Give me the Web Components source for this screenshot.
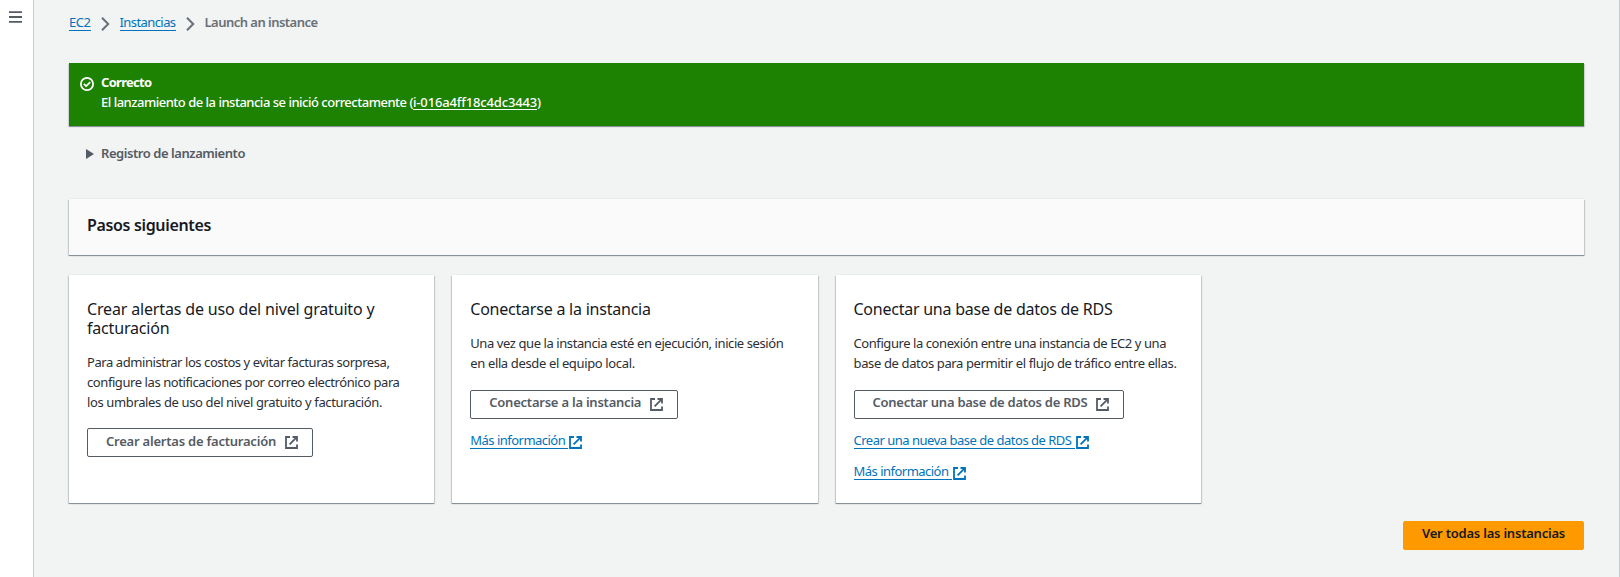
<!DOCTYPE html>
<html lang="es">
<head>
<meta charset="utf-8">
<title>Launch an instance | EC2</title>
<style>
html, body { margin: 0; height: 100%; }
body { font: 13px/20px "Noto Sans", "Open Sans", sans-serif; color: #16191f; background: #f2f3f3; overflow: hidden; }
</style>
</head>
<body>
<launch-page></launch-page>
<script>
const define = (name, html, setup) => customElements.define(name, class extends HTMLElement {
  connectedCallback() {
    if (this.shadowRoot) return;
    this.attachShadow({ mode: 'open' }).innerHTML = html;
    if (setup) setup(this, this.shadowRoot);
  }
});

// A line of text whose tracking is adjusted so that it spans `w` pixels.
define('fit-text', `<style>
  :host { display: inline-block; white-space: pre; }
  </style><slot></slot>`, host => {
  const w = parseFloat(host.getAttribute('w'));
  const n = host.textContent.length;
  const natural = host.getBoundingClientRect().width;
  host.style.letterSpacing = ((w - natural) / n).toFixed(3) + 'px';
});

define('icon-external', `<style>
  :host { display: block; width: 13px; height: 13px; } svg { display: block; }
  </style><svg width="13" height="13" viewBox="0 0 13 13" fill="none" stroke="currentColor" stroke-width="1.8">
  <path d="M5 1H1V12H12V8.5"/><path d="M7.5 1H12V5.5M11.8 1.2L4.6 8.4"/></svg>`);

define('icon-menu', `<style>
  :host { display: block; color: #545b64; } svg { display: block; }
  </style><svg width="13" height="12" viewBox="0 0 13 12" fill="currentColor">
  <path d="M0 .2h13v1.8H0zM0 5.1h13v1.8H0zM0 10h13v1.8H0z"/></svg>`);

define('icon-chevron', `<style>
  :host { display: block; color: #687078; } svg { display: block; }
  </style><svg width="9" height="14" viewBox="0 0 9 14" fill="none" stroke="currentColor" stroke-width="2">
  <path d="M1 .8L7.2 7L1 13.2"/></svg>`);

define('icon-success', `<style>
  :host { display: block; color: #fff; } svg { display: block; }
  </style><svg width="14" height="14" viewBox="0 0 14 14" fill="none" stroke="currentColor" stroke-width="1.8">
  <circle cx="7" cy="7" r="6.1"/><path d="M3.8 6.8L6.2 9.1L10.2 5.1"/></svg>`);

define('side-rail', `<style>
  :host { display: block; box-sizing: border-box; width: 34px; background: #fff; border-right: 1px solid #c9cccc; padding: 11px 0 0 9px; }
  </style><icon-menu></icon-menu>`);

define('crumb-trail', `<style>
  :host { display: flex; height: 20px; line-height: 20px; }
  a { color: #0073bb; border-bottom: 1px solid #0073bb; height: 18px; }
  icon-chevron { margin: 5px 10px 0 10px; }
  b { font-weight: 600; color: #687078; }
  </style>
  <a><fit-text w="21.5">EC2</fit-text></a><icon-chevron></icon-chevron>
  <a><fit-text w="56">Instancias</fit-text></a><icon-chevron></icon-chevron>
  <b><fit-text w="113">Launch an instance</fit-text></b>`);

define('flash-bar', `<style>
  :host { display: flex; box-sizing: border-box; height: 63px; padding: 9px 11px; background: #1d8102; color: #fff;
    box-shadow: 0 1px 0 0 #879196, 1px 1px 1px 0 rgba(0,28,36,.15), -1px 1px 1px 0 rgba(0,28,36,.15); }
  icon-success { margin: 5px 7px 0 0; }
  b { display: block; font-weight: 700; } p { margin: 0; font-weight: 500; display: flex; }
  a { height: 17px; border-bottom: 1px solid #fff; }
  </style>
  <icon-success></icon-success>
  <div><b><fit-text w="50.5">Correcto</fit-text></b>
  <p><fit-text w="312">El lanzamiento de la instancia se inició correctamente (</fit-text><a><fit-text w="124">i-016a4ff18c4dc3443</fit-text></a>)</p></div>`);

define('expand-row', `<style>
  :host { display: flex; align-items: center; height: 20px; color: #545b64; font-weight: 600; padding-left: 17px; }
  i { width: 0; height: 0; border: solid transparent; border-width: 5px 0 5px 8px; border-left-color: #545b64; margin: 2px 7px 0 0; }
  </style><i></i><slot></slot>`);

define('panel-header', `<style>
  :host { display: block; box-sizing: border-box; height: 56px; padding: 16px 18px; background: #fafafa;
    font-size: 16px; line-height: 20px; font-weight: 600;
    box-shadow: 0 1px 0 0 #879196, 1px 1px 1px 0 #c6caca, -1px 1px 1px 0 #c6caca, 0 -1px 0 0 #eaeded; }
  </style><slot></slot>`);

define('step-card', `<style>
  :host { display: flex; flex-direction: column; align-items: flex-start; box-sizing: border-box; height: 228px; padding: 25px 18px 0; background: #fff;
    box-shadow: 0 1px 0 0 #879196, 1px 1px 1px 0 #c6caca, -1px 1px 1px 0 #c6caca, 0 -1px 0 0 #eaeded; }
  .h { font-size: 16px; line-height: 19px; display: flex; flex-direction: column; align-items: flex-start; }
  .b { margin-top: 15px; line-height: 19.8px; color: #2b2f35; display: flex; flex-direction: column; align-items: flex-start; }
  .a { margin-top: 16px; display: flex; flex-direction: column; align-items: flex-start; gap: 11px; }
  </style><div class="h"><slot name="title"></slot></div><div class="b"><slot></slot></div><div class="a"><slot name="actions"></slot></div>`);

define('action-button', `<style>
  :host { display: flex; box-sizing: border-box; height: 29px; border: 1px solid #545b64; border-radius: 2px; padding: 2px 14px 0 18px; color: #545b64; font-weight: 600; gap: 9px; line-height: 20px; }
  :host([raised]) { padding-top: 1px; }
  :host([raised]) icon-external { margin-top: 6px; }
  :host([primary]) { background: #ff9900; border-color: #ff9900; color: #16191f; padding-right: 18px; }
  :host([primary]) icon-external { display: none; }
  icon-external { margin-top: 5px; }
  </style><slot></slot><icon-external></icon-external>`);

define('ext-link', `<style>
  :host { display: flex; color: #0073bb; height: 20px; }
  span { height: 18px; border-bottom: 1px solid #0073bb; padding-right: 3px; }
  icon-external { margin: 6px 0 0 1px; }
  </style><span><slot></slot></span><icon-external></icon-external>`);

define('launch-page', `<style>
  :host { display: flex; height: 577px; }
  main { flex: 1; display: flex; flex-direction: column; box-sizing: border-box; border-right: 1px solid #c9cccc; padding: 12px 35px 0; }
  flash-bar { margin-top: 31px; }
  expand-row { margin-top: 17px; }
  panel-header { margin-top: 36px; }
  .cards { display: grid; grid-template-columns: repeat(4, 1fr); gap: 18px; margin-top: 20px; }
  .foot { display: flex; justify-content: flex-end; margin-top: 18px; }
  </style>
  <side-rail></side-rail>
  <main>
    <crumb-trail></crumb-trail>
    <flash-bar></flash-bar>
    <expand-row><fit-text w="144">Registro de lanzamiento</fit-text></expand-row>
    <panel-header><fit-text w="124">Pasos siguientes</fit-text></panel-header>
    <div class="cards">
      <step-card>
        <fit-text slot="title" w="287.5">Crear alertas de uso del nivel gratuito y</fit-text>
        <fit-text slot="title" w="82.5">facturación</fit-text>
        <fit-text w="302.5">Para administrar los costos y evitar facturas sorpresa,</fit-text>
        <fit-text w="312.5">configure las notificaciones por correo electrónico para</fit-text>
        <fit-text w="295">los umbrales de uso del nivel gratuito y facturación.</fit-text>
        <action-button slot="actions"><fit-text w="170">Crear alertas de facturación</fit-text></action-button>
      </step-card>
      <step-card>
        <fit-text slot="title" w="180.5">Conectarse a la instancia</fit-text>
        <fit-text w="313">Una vez que la instancia esté en ejecución, inicie sesión</fit-text>
        <fit-text w="164.5">en ella desde el equipo local.</fit-text>
        <action-button raised slot="actions"><fit-text w="152">Conectarse a la instancia</fit-text></action-button>
        <ext-link slot="actions"><fit-text w="95">Más información</fit-text></ext-link>
      </step-card>
      <step-card>
        <fit-text slot="title" w="259">Conectar una base de datos de RDS</fit-text>
        <fit-text w="312.5">Configure la conexión entre una instancia de EC2 y una</fit-text>
        <fit-text w="323">base de datos para permitir el flujo de tráfico entre ellas.</fit-text>
        <action-button raised slot="actions"><fit-text w="215">Conectar una base de datos de RDS</fit-text></action-button>
        <ext-link slot="actions"><fit-text w="218">Crear una nueva base de datos de RDS</fit-text></ext-link>
        <ext-link slot="actions"><fit-text w="95">Más información</fit-text></ext-link>
      </step-card>
    </div>
    <div class="foot"><action-button primary raised><fit-text w="143">Ver todas las instancias</fit-text></action-button></div>
  </main>`);
</script>
</body>
</html>
